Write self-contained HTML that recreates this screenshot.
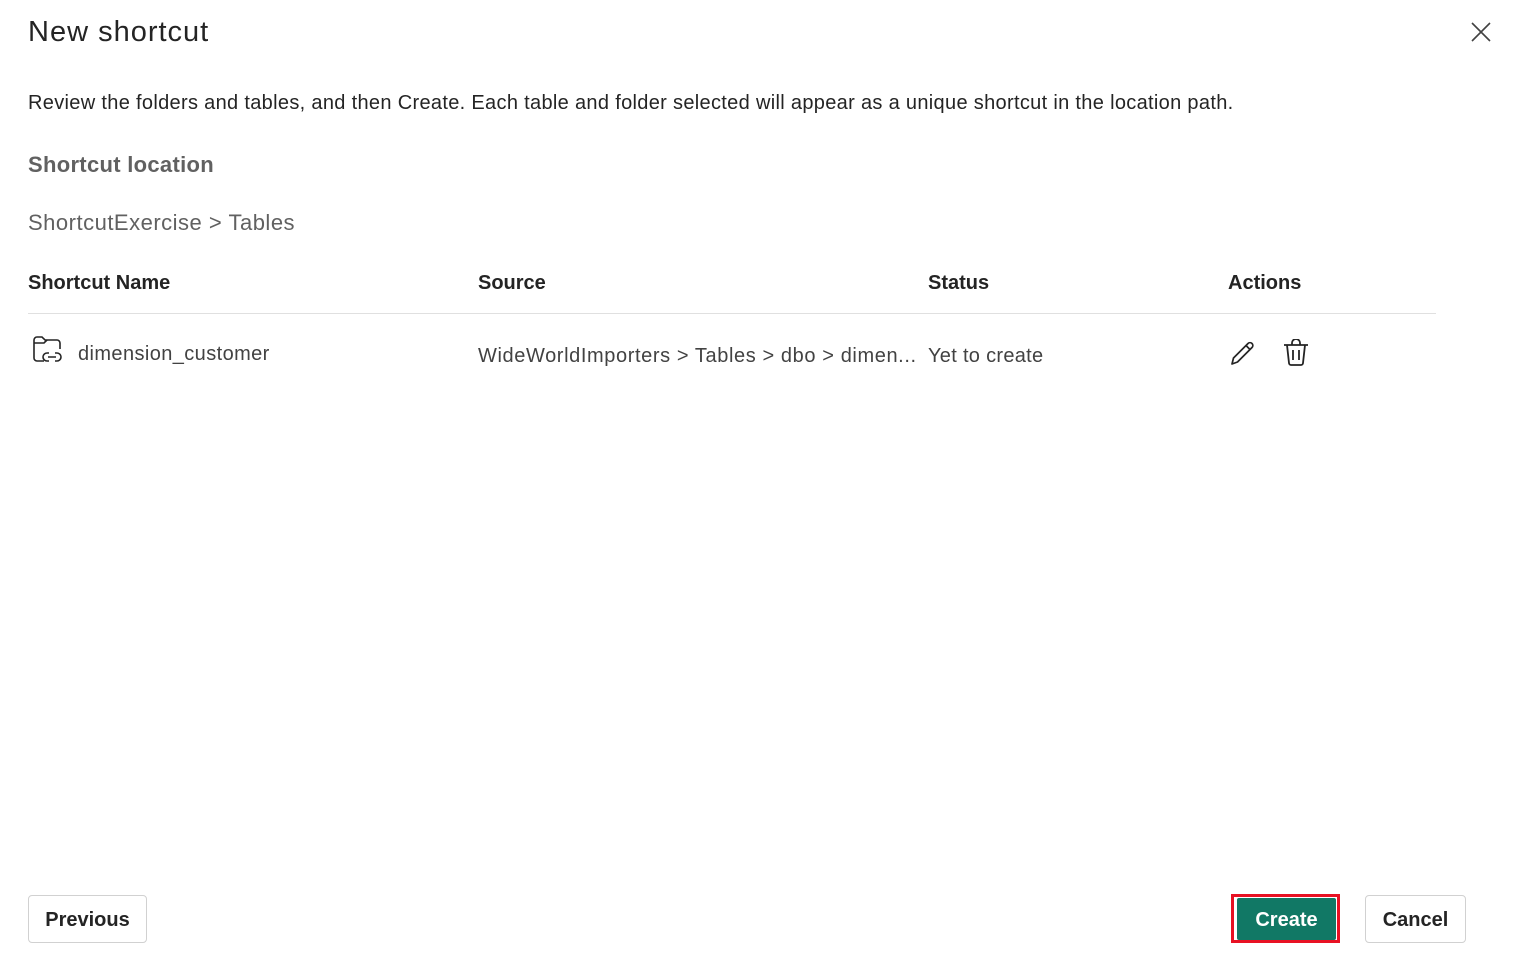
<!DOCTYPE html>
<html><head><style>
body{margin:0;width:1525px;height:973px;background:#fff;font-family:"Liberation Sans",sans-serif;color:#242424;position:relative;overflow:hidden}
.a{position:absolute;white-space:nowrap}
.btn{position:absolute;box-sizing:border-box;border:1px solid #d1d1d1;border-radius:4px;font-size:20px;font-weight:bold;display:flex;align-items:center;justify-content:center;background:#fff;padding-top:3px}
</style></head><body>
<div class="a" style="left:28px;top:16px;font-size:29px;letter-spacing:1px">New shortcut</div>
<svg class="a" style="left:1470px;top:21px" width="22" height="22" viewBox="0 0 22 22"><path d="M2 2L20 20M20 2L2 20" stroke="#424242" stroke-width="1.6"/></svg>
<div class="a" style="left:28px;top:92px;font-size:20px;letter-spacing:0.32px">Review the folders and tables, and then Create. Each table and folder selected will appear as a unique shortcut in the location path.</div>
<div class="a" style="left:28px;top:152px;font-size:22px;color:#616161;font-weight:bold;letter-spacing:0.3px">Shortcut location</div>
<div class="a" style="left:28px;top:210px;font-size:22px;color:#616161;letter-spacing:0.5px">ShortcutExercise &gt; Tables</div>
<div class="a" style="left:28px;top:272px;font-size:20px;font-weight:bold">Shortcut Name</div>
<div class="a" style="left:478px;top:272px;font-size:20px;font-weight:bold">Source</div>
<div class="a" style="left:928px;top:272px;font-size:20px;font-weight:bold">Status</div>
<div class="a" style="left:1228px;top:272px;font-size:20px;font-weight:bold">Actions</div>
<div class="a" style="left:28px;top:313px;width:1408px;height:1px;background:#e0e0e0"></div>
<svg class="a" style="left:32px;top:336px" width="32" height="30" viewBox="0 0 32 30" fill="none" stroke="#242424" stroke-width="1.6"><path d="M12 25H5a3 3 0 0 1-3-3V4a3 3 0 0 1 3-3h5l3 3h12a3 3 0 0 1 3 3v6"/><path d="M2 7h10l3-3"/><path d="M17 17h-2a4 4 0 0 0 0 8h2M23 17h2a4 4 0 0 1 0 8h-2M16 21h8"/></svg>
<div class="a" style="left:78px;top:343px;font-size:20px;color:#424242;letter-spacing:0.4px">dimension_customer</div>
<div class="a" style="left:478px;top:345px;font-size:20px;color:#424242;letter-spacing:0.6px">WideWorldImporters &gt; Tables &gt; dbo &gt; dimen...</div>
<div class="a" style="left:928px;top:345px;font-size:20px;color:#424242;letter-spacing:0.3px">Yet to create</div>
<svg class="a" style="left:1229px;top:339px" width="28" height="28" viewBox="0 0 28 28" fill="none" stroke="#242424" stroke-width="1.7" stroke-linejoin="round"><path d="M3 25l1.5-6L19 4.5a2.5 2.5 0 0 1 4 4L8.5 23z"/><path d="M17 6.5l4 4"/></svg>
<svg class="a" style="left:1283px;top:339px" width="26" height="28" viewBox="0 0 26 28" fill="none" stroke="#242424" stroke-width="1.8"><path d="M1 6h24M9 6V4a4 4 0 0 1 8 0v2M4 6l2 18a2 2 0 0 0 2 2h10a2 2 0 0 0 2-2l2-18M10 11v10M16 11v10"/></svg>
<div class="btn" style="left:28px;top:895px;width:119px;height:48px">Previous</div>
<div class="a" style="left:1231px;top:894px;width:109px;height:49px;box-sizing:border-box;border:3px solid #e81123;background:#fff"></div>
<div class="btn" style="left:1237px;top:898px;width:99px;height:42px;background:#117865;color:#fff;border:none;border-radius:2px">Create</div>
<div class="btn" style="left:1365px;top:895px;width:101px;height:48px">Cancel</div>
</body></html>
